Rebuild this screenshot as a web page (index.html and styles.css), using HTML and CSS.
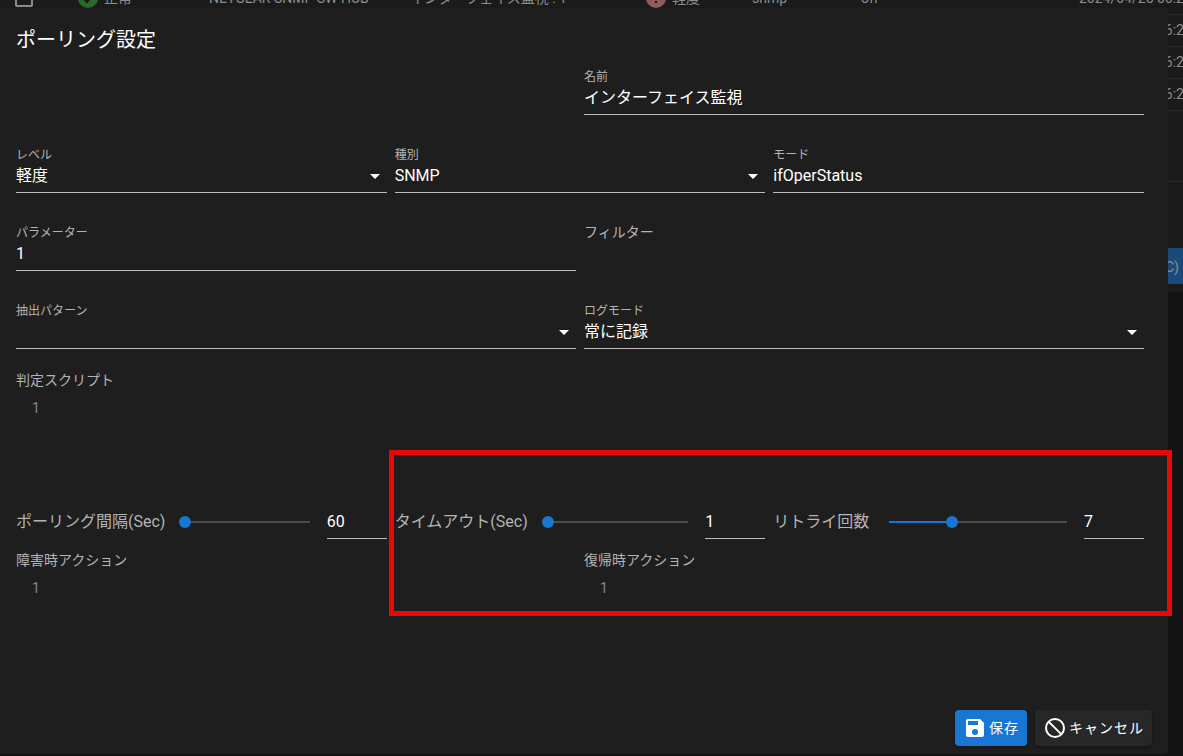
FILE: index.html
```html
<!DOCTYPE html>
<html lang="ja">
<head>
<meta charset="utf-8">
<title>ポーリング設定</title>
<link rel="stylesheet" href="styles.css">
</head>
<body>
<div class="page">
  <div class="card">
    <table class="list">
      <colgroup>
        <col class="c-check"><col class="c-state"><col class="c-node"><col class="c-name"><col class="c-level"><col class="c-type"><col class="c-log"><col>
      </colgroup>
      <tbody>
        <tr>
          <td class="check"><input type="checkbox" aria-label="選択"></td>
          <td><span class="state"><svg width="20" height="20" viewBox="0 0 20 20"><circle cx="10" cy="10" r="10" fill="#2a6a28"/><path d="M5 10l4 4 7-8" fill="none" stroke="#151515" stroke-width="2"/></svg>正常</span></td>
          <td>NETGEAR SNMP SW HUB</td>
          <td>インターフェイス監視 : 1</td>
          <td><span class="state"><svg width="20" height="20" viewBox="0 0 20 20"><circle cx="10" cy="10" r="10" fill="#935c5c"/><path d="M9 5h2v6H9zM9 13h2v2H9z" fill="#151515"/></svg>軽度</span></td>
          <td>snmp</td>
          <td>off</td>
          <td>2024/04/25 06:22</td>
        </tr>
        <tr><td colspan="7"></td><td>2024/04/25 06:22</td></tr>
        <tr><td colspan="7"></td><td>2024/04/25 06:22</td></tr>
        <tr><td colspan="7"></td><td>2024/04/25 06:22</td></tr>
      </tbody>
    </table>
    <div class="pager"></div>
    <div class="card-actions"><button type="button" class="sync">同期 (SYNC)</button></div>
  </div>

  <form class="dialog" role="dialog" aria-labelledby="title">
    <h1 class="title" id="title">ポーリング設定</h1>
    <div class="fields">
      <div class="row two">
        <div></div>
        <div class="field"><label for="name">名前</label><input id="name" type="text" value="インターフェイス監視"></div>
      </div>
      <div class="row three">
        <div class="field"><label for="level">レベル</label><select id="level"><option>軽度</option></select><svg class="caret" width="10" height="5" viewBox="0 0 10 5"><path d="M0 0h10L5 5z"/></svg></div>
        <div class="field"><label for="type">種別</label><select id="type"><option>SNMP</option></select><svg class="caret" width="10" height="5" viewBox="0 0 10 5"><path d="M0 0h10L5 5z"/></svg></div>
        <div class="field"><label for="mode">モード</label><input id="mode" type="text" value="ifOperStatus"></div>
      </div>
      <div class="row two">
        <div class="field"><label for="params">パラメーター</label><input id="params" type="text" value="1"></div>
        <div class="editor"><label for="filter">フィルター</label><input id="filter" class="code" type="text"></div>
      </div>
      <div class="row two">
        <div class="field"><label for="pattern">抽出パターン</label><select id="pattern"><option></option></select><svg class="caret" width="10" height="5" viewBox="0 0 10 5"><path d="M0 0h10L5 5z"/></svg></div>
        <div class="field"><label for="logmode">ログモード</label><select id="logmode"><option>常に記録</option></select><svg class="caret" width="10" height="5" viewBox="0 0 10 5"><path d="M0 0h10L5 5z"/></svg></div>
      </div>
    </div>
    <div class="editor script">
      <label for="script">判定スクリプト</label>
      <div class="lines"><span class="line-no">1</span><textarea id="script" class="code"></textarea></div>
    </div>
    <div class="row three">
      <div class="slider"><label for="interval">ポーリング間隔(Sec)</label><input id="interval" type="range" min="60" max="3600" value="60" style="--pos:0%"><input class="number" type="text" aria-label="ポーリング間隔" value="60"></div>
      <div class="slider"><label for="timeout">タイムアウト(Sec)</label><input id="timeout" type="range" min="1" max="60" value="1" style="--pos:0%"><input class="number" type="text" aria-label="タイムアウト" value="1"></div>
      <div class="slider"><label for="retry">リトライ回数</label><input id="retry" type="range" min="0" max="20" value="7" style="--pos:35%"><input class="number" type="text" aria-label="リトライ回数" value="7"></div>
    </div>
    <div class="row two actions">
      <div class="editor">
        <label for="fail">障害時アクション</label>
        <div class="lines"><span class="line-no">1</span><textarea id="fail" class="code"></textarea></div>
      </div>
      <div class="editor">
        <label for="repair">復帰時アクション</label>
        <div class="lines"><span class="line-no">1</span><textarea id="repair" class="code"></textarea></div>
      </div>
    </div>
    <div class="footer">
      <button type="button" class="btn save"><svg width="24" height="24" viewBox="0 0 24 24"><path d="M15 9H5V5h10m-3 14a3 3 0 0 1-3-3 3 3 0 0 1 3-3 3 3 0 0 1 3 3 3 3 0 0 1-3 3m5-16H5a2 2 0 0 0-2 2v14a2 2 0 0 0 2 2h14a2 2 0 0 0 2-2V7z"/></svg><span>保存</span></button>
      <button type="button" class="btn cancel"><svg width="24" height="24" viewBox="0 0 24 24"><g fill="none" stroke="#fff" stroke-width="2"><circle cx="12" cy="12" r="9"/><path d="M5.600 5.600l12.800 12.800"/></g></svg><span>キャンセル</span></button>
    </div>
    <div class="highlight"></div>
  </form>
</div>
</body>
</html>
```

FILE: styles.css
```css
* { box-sizing: border-box; }

body {
  margin: 0;
  background: #131313;
  color: #fff;
  font-family: Roboto, "Noto Sans CJK JP", sans-serif;
  font-size: 16px;
}

input, select, textarea, button { font: inherit; color: inherit; margin: 0; }

.page {
  position: relative;
  min-height: 100vh;
  overflow: hidden;
}

/* dimmed list behind the dialog */
.card {
  margin-top: -18px;
  background: #1b1b1b;
  color: #8d8d8d;
  font-size: 14px;
}

.list {
  width: 100%;
  table-layout: fixed;
  border-collapse: collapse;
}
.list td {
  height: 32px;
  padding: 0;
  border-bottom: 1px solid #2b2b2b;
  white-space: nowrap;
  line-height: 20px;
}
.list .check { padding-left: 15px; }
.check input {
  display: block;
  appearance: none;
  width: 18px;
  height: 18px;
  border: 2px solid #8d8d8d;
  border-radius: 2px;
}
.state { display: flex; align-items: center; gap: 6px; }
.c-check { width: 78px; }
.c-state { width: 131px; }
.c-node { width: 201px; }
.c-name { width: 236px; }
.c-level { width: 106px; }
.c-type { width: 109px; }
.c-log { width: 218px; }

.pager { height: 71px; border-bottom: 1px solid #2b2b2b; }
.card-actions {
  display: flex;
  justify-content: flex-end;
  padding: 66px 0 8px;
}
.sync {
  height: 36px;
  padding: 0 4px 0 16px;
  border: 0;
  background: #1a4a7c;
  font-size: 14px;
}

/* dialog */
.dialog {
  position: absolute;
  inset: 8px 15px 2px 0;
  display: flex;
  flex-direction: column;
  padding: 16px 24px 8px 16px;
  background: #1e1e1e;
  border-radius: 0 0 4px 0;
}

.title {
  margin: 0 0 10px;
  font-size: 20px;
  font-weight: 400;
  line-height: 32px;
}

.fields { display: flex; flex-direction: column; gap: 29px; }
.row { display: grid; gap: 8px; }
.two { grid-template-columns: repeat(2, minmax(0, 1fr)); }
.three { grid-template-columns: repeat(3, minmax(0, 1fr)); }

.field {
  position: relative;
  display: flex;
  flex-direction: column;
  border-bottom: 1px solid #bcbcbc;
  padding: 1px 0 5px;
}
.field label { font-size: 12px; line-height: 20px; color: #b4b4b4; }
.field input, .field select {
  appearance: none;
  width: 100%;
  height: 22px;
  padding: 0;
  border: 0;
  outline: 0;
  background: transparent;
  line-height: 22px;
}
.caret {
  position: absolute;
  right: 7px;
  bottom: 13px;
  fill: #fff;
  pointer-events: none;
}

.editor { display: flex; flex-direction: column; gap: 8px; }
.editor label { font-size: 14px; line-height: 20px; color: #b4b4b4; }
.code {
  flex: 1;
  min-width: 0;
  height: 20px;
  padding: 0;
  border: 0;
  outline: 0;
  resize: none;
  background: transparent;
  font-size: 14px;
}
.lines { display: flex; gap: 12px; padding-left: 16px; }
.line-no { font-size: 14px; line-height: 20px; color: #858585; }

.script { margin: 21px 0 92px; }

.slider { display: flex; align-items: flex-start; }
.slider label {
  margin-right: 14px;
  line-height: 24px;
  color: #b4b4b4;
  white-space: nowrap;
}
.slider input[type="range"] {
  appearance: none;
  flex: 1;
  min-width: 0;
  height: 24px;
  margin-right: 11px;
  background: transparent;
}
.slider input::-webkit-slider-runnable-track {
  height: 12px;
  background: linear-gradient(to right, #1976d2 var(--pos), #4b4b4b var(--pos)) center / calc(100% - 12px) 2px no-repeat;
}
.slider input::-webkit-slider-thumb {
  appearance: none;
  width: 12px;
  height: 12px;
  border-radius: 50%;
  background: #1976d2;
}
.slider .number {
  width: 60px;
  height: 29px;
  padding: 0 0 5px;
  border: 0;
  border-bottom: 1px solid #bcbcbc;
  outline: 0;
  background: transparent;
}

.actions { margin-top: 11px; }

.footer {
  display: flex;
  justify-content: flex-end;
  gap: 8px;
  margin-top: auto;
  margin-right: -8px;
}
.btn {
  display: flex;
  align-items: center;
  gap: 2px;
  height: 36px;
  padding: 0 8px;
  border: 0;
  border-radius: 4px;
  font-size: 14px;
  letter-spacing: 1px;
  box-shadow: 0 2px 3px rgba(0, 0, 0, .3);
}
.btn span { padding-bottom: 2px; }
.btn svg { fill: #fff; }
.save { background: #1976d2; }
.cancel { background: #272727; }

/* frame drawn over the timeout and retry settings */
.highlight {
  position: absolute;
  top: 442px;
  left: 33.3%;
  right: -4px;
  height: 166px;
  border: 5px solid #e80808;
  pointer-events: none;
}
```
